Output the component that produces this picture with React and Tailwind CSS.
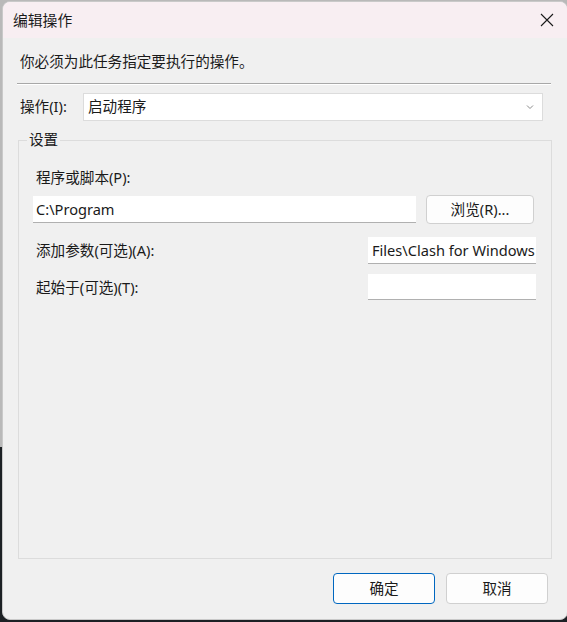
import React from "react";

const F = { fontFamily: '"Noto Sans", "Noto Sans CJK SC", sans-serif' };

export default function App() {
  return (
    <div
      className="w-[567px] h-[622px] overflow-hidden pl-[2px] pt-[1px] bg-[linear-gradient(to_bottom,#b9b9b9_0px,#b9b9b9_447px,#1c2024_447px)]"
      style={F}
    >
      <div className="w-[566px] h-[619px] rounded-[8px] overflow-hidden bg-[#f0f0f0] border border-[#c9c9c9] flex flex-col text-[#1a1a1a] text-[14.6px] leading-none">
        {/* title bar */}
        <div className="h-[36px] shrink-0 bg-[#f8eef2] flex items-center justify-between pl-[10px] pr-[10px]">
          <span className="text-[14.8px]">编辑操作</span>
          <svg width="14" height="14" viewBox="0 0 14 14" className="mr-[3px]">
            <path d="M1 1L13 13M13 1L1 13" stroke="#1a1a1a" strokeWidth="1.1" />
          </svg>
        </div>
        {/* body */}
        <div className="flex-1 flex flex-col px-[14px]">
          <div className="pt-[16px] pl-[3px]">你必须为此任务指定要执行的操作。</div>
          <div className="mt-[14px] mr-[2px] h-[2px] border-t border-[#a8a8a8] border-b border-b-white" />
          <div className="mt-[8px] flex items-center">
            <span className="pl-[3px] w-[66px]">操作(I):</span>
            <div className="w-[460px] h-[28px] bg-white border border-[#dcdcdc] flex items-center justify-between pl-[4px] pr-[8px]">
              <span>启动程序</span>
              <svg width="8" height="6" viewBox="0 0 8 6">
                <path d="M1 1.5L4 4.5L7 1.5" stroke="#8a8a8a" strokeWidth="1" fill="none" />
              </svg>
            </div>
          </div>
          {/* group */}
          <div className="relative mt-[19px] ml-[1px] w-[534px] h-[419px] border border-[#dcdcdc] pt-[29px] pl-[14px]">
            <span className="absolute left-[8px] -top-[9px] bg-[#f0f0f0] px-[2px]">设置</span>
            <div className="pl-[3px]">程序或脚本(P):</div>
            <div className="mt-[11px] flex items-center">
              <div className="w-[383px] h-[27px] bg-white border-b border-[#b0b0b0] flex items-center pl-[3px]">
                C:\Program
              </div>
              <button className="ml-[10px] w-[108px] h-[29px] bg-[#fdfdfd] border border-[#d0d0d0] rounded-[4px]">
                浏览(R)...
              </button>
            </div>
            <div className="mt-[13px] flex items-center">
              <span className="w-[335px] pl-[3px]">添加参数(可选)(A):</span>
              <div className="w-[168px] h-[27px] bg-white border-b border-[#b0b0b0] flex items-center pl-[4px] overflow-hidden whitespace-nowrap">
                Files\Clash for Windows
              </div>
            </div>
            <div className="mt-[10px] flex items-center">
              <span className="w-[335px] pl-[3px]">起始于(可选)(T):</span>
              <div className="w-[168px] h-[26px] bg-white border-b border-[#b0b0b0]" />
            </div>
          </div>
          {/* buttons */}
          <div className="mt-[14px] flex justify-end gap-[11px] pr-[5px]">
            <button className="w-[102px] h-[31px] bg-[#fdfdfd] border border-[#0067c0] rounded-[4px]">
              确定
            </button>
            <button className="w-[102px] h-[31px] bg-[#fdfdfd] border border-[#d0d0d0] rounded-[4px]">
              取消
            </button>
          </div>
        </div>
      </div>
    </div>
  );
}
